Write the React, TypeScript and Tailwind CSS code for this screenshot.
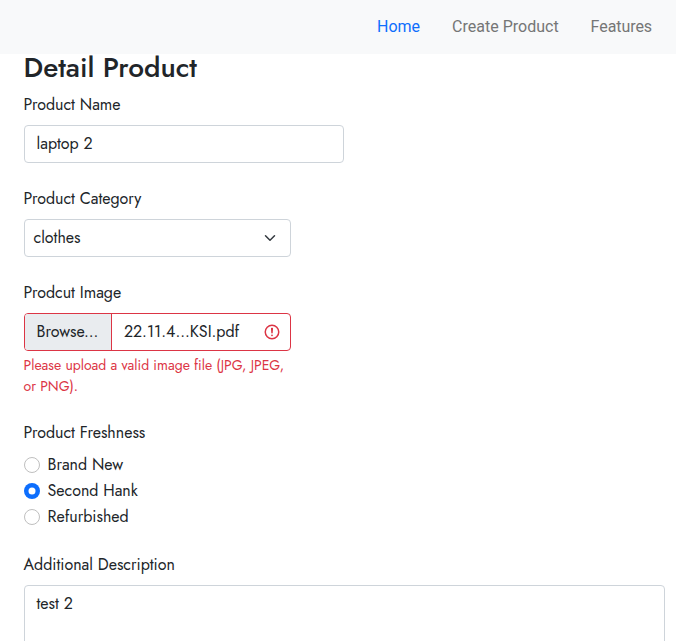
import type { ReactNode } from "react";

function Label({ children }: { children: ReactNode }) {
  return <div className="mb-2 h-6 whitespace-nowrap">{children}</div>;
}

function Radio({ checked, children }: { checked?: boolean; children: ReactNode }) {
  return (
    <label className="mb-0.5 flex h-6 items-center gap-2">
      {checked ? (
        <svg className="size-4" viewBox="0 0 16 16">
          <circle cx="8" cy="8" r="8" fill="#0d6efd" />
          <circle cx="8" cy="8" r="3.5" fill="#fff" />
        </svg>
      ) : (
        <span className="size-4 rounded-full border border-[#bfbfbf] bg-white" />
      )}
      <span className="whitespace-nowrap">{children}</span>
    </label>
  );
}

export default function App() {
  return (
    <div className="h-[641px] w-full overflow-hidden bg-white font-['Jost','Lato',sans-serif] text-base leading-6 text-[#212529]">
      <nav className="flex h-[54px] items-center justify-end gap-8 bg-[#f8f9fa] pr-6 font-['Roboto',sans-serif] text-[#757676]">
        <a className="text-[#0d6efd]">Home</a>
        <a>Create Product</a>
        <a className="tracking-[-0.07px]">Features</a>
      </nav>
      <main className="pl-[23.5px] pr-[11.5px]">
        <h1 className="h-[39px] text-[28px] font-medium leading-[28px]">Detail Product</h1>
        <Label>Product Name</Label>
        <div className="mb-6 flex h-[38px] w-80 items-center rounded border border-[#ced4da] px-3">laptop 2</div>
        <Label>Product Category</Label>
        <div className="mb-6 flex h-[38px] w-[267px] items-center justify-between rounded border border-[#ced4da] pl-[9px] pr-[11.5px]">
          <span>clothes</span>
          <svg className="h-3 w-4" viewBox="0 0 16 16" fill="none" stroke="#343a40" strokeWidth="2" strokeLinecap="round" strokeLinejoin="round"><path d="M2 5l6 6 6-6" /></svg>
        </div>
        <Label>Prodcut Image</Label>
        <div className="flex h-[38px] w-[267px] items-stretch overflow-hidden rounded border border-[#dc3545]">
          <div className="flex w-[87.4px] items-center border-r border-[#dc3545] bg-[#e9ecef] pl-3">Browse...</div>
          <div className="flex flex-1 items-center justify-between pl-3 pr-[8.5px]">
            <span>22.11.4...KSI.pdf</span>
            <svg className="size-[18px]" viewBox="0 0 12 12" fill="none" stroke="#dc3545"><circle cx="6" cy="6" r="4.5" /><path strokeLinejoin="round" d="M5.8 3.6h.4L6 6.5z" /><circle cx="6" cy="8.2" r=".6" fill="#dc3545" stroke="none" /></svg>
          </div>
        </div>
        <p className="mb-6 mt-1 w-[267px] text-sm leading-[21px] text-[#dc3545]">
          Please upload a valid image file (JPG, JPEG, or PNG).
        </p>
        <Label>Product Freshness</Label>
        <div className="mb-6">
          <Radio>Brand New</Radio>
          <Radio checked>Second Hank</Radio>
          <Radio>Refurbished</Radio>
        </div>
        <Label>Additional Description</Label>
        <div className="h-[86px] rounded border border-[#ced4da] px-3 py-1.5">test 2</div>
      </main>
    </div>
  );
}
